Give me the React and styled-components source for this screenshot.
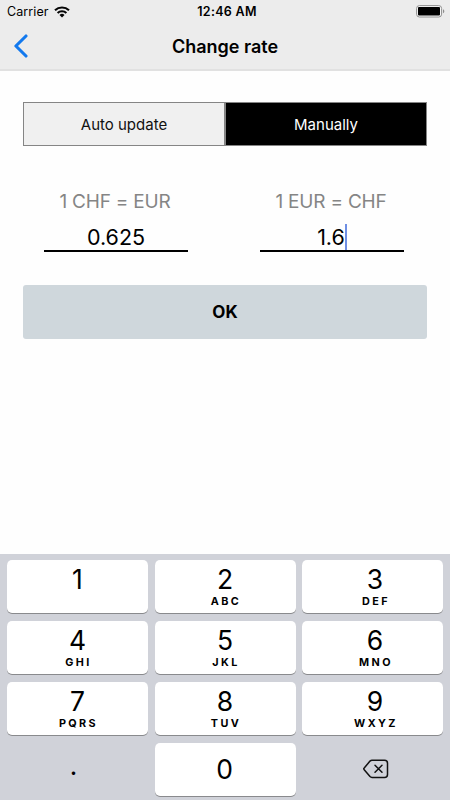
import { useState } from 'react';
//Styles
import styled, { createGlobalStyle } from 'styled-components';

const keys = [
  { digit: '1' },
  { digit: '2', letters: 'ABC' },
  { digit: '3', letters: 'DEF', shift: 5 },
  { digit: '4', letters: 'GHI' },
  { digit: '5', letters: 'JKL' },
  { digit: '6', letters: 'MNO', shift: 5 },
  { digit: '7', letters: 'PQRS' },
  { digit: '8', letters: 'TUV' },
  { digit: '9', letters: 'WXYZ', shift: 5 },
];

const WifiIcon = () => (
  <svg width="16" height="12" viewBox="0 0 16 12" fill="none" stroke="#050505" strokeWidth="2.1">
    <path d="M1 4.3a10.2 10.2 0 0 1 14 0" />
    <path d="M3.6 7a6.4 6.4 0 0 1 8.8 0" />
    <path d="M8 11.4 5.5 8.9a3.7 3.7 0 0 1 5 0z" fill="#050505" stroke="none" />
  </svg>
);

const BatteryIcon = () => (
  <svg width="29" height="13" viewBox="0 0 29 13">
    <rect x="0.6" y="0.6" width="25" height="11.4" rx="2.8" fill="#f7f7f7" stroke="#8f8f8f" />
    <rect x="2" y="2" width="22" height="8.6" rx="1" fill="#000" />
    <path d="M27 4.2c1.8.7 1.8 3.4 0 4.1z" fill="#8f8f8f" />
  </svg>
);

const BackIcon = () => (
  <svg width="14" height="24" viewBox="0 0 14 24" fill="none">
    <path
      d="M12 2 1.9 12 12 22"
      stroke="#1279ee"
      strokeWidth="3.1"
      strokeLinecap="round"
      strokeLinejoin="round"
    />
  </svg>
);

const DeleteIcon = () => (
  <svg width="26" height="20" viewBox="0 0 26 20" fill="none" stroke="#111" strokeLinecap="round" strokeLinejoin="round">
    <path
      d="M9 1.2h12.5a3 3 0 0 1 3 3v11.2a3 3 0 0 1-3 3H9c-.8 0-1.4-.3-2-.9L1.2 10.7c-.5-.5-.5-1.2 0-1.7L7 2.1c.6-.6 1.2-.9 2-.9z"
      strokeWidth="1.5"
    />
    <path d="m12 6.3 7 7M19 6.3l-7 7" strokeWidth="1.5" />
  </svg>
);

const App = () => {
  const [mode, setMode] = useState('manual');

  return (
    <Screen>
      <GlobalStyle />
      <Header>
        <StatusBar>
          <Carrier>
            <span>Carrier</span>
            <WifiIcon />
          </Carrier>
          <Time>12:46 AM</Time>
          <Battery>
            <BatteryIcon />
          </Battery>
        </StatusBar>
        <NavBar>
          <BackButton aria-label="Back">
            <BackIcon />
          </BackButton>
          <Title>Change rate</Title>
        </NavBar>
      </Header>
      <Content>
        <Tabs>
          <Tab $active={mode === 'auto'} onClick={() => setMode('auto')}>
            Auto update
          </Tab>
          <Tab $active={mode === 'manual'} onClick={() => setMode('manual')}>
            Manually
          </Tab>
        </Tabs>
        <Rates>
          <Rate>
            <RateLabel>1 CHF = EUR</RateLabel>
            <RateField>0.625</RateField>
          </Rate>
          <Rate>
            <RateLabel>1 EUR = CHF</RateLabel>
            <RateField>
              1.6
              <Caret />
            </RateField>
          </Rate>
        </Rates>
        <OkButton>OK</OkButton>
      </Content>
      <Keyboard>
        {keys.map(({ digit, letters, shift }) => (
          <Key key={digit} $shift={shift}>
            <Digit>{digit}</Digit>
            <Letters>{letters}</Letters>
          </Key>
        ))}
        <PlainKey>
          <Dot>.</Dot>
        </PlainKey>
        <Key $centered>
          <Digit>0</Digit>
        </Key>
        <PlainKey $shift={6} aria-label="Delete">
          <DeleteIcon />
        </PlainKey>
      </Keyboard>
    </Screen>
  );
};

const GlobalStyle = createGlobalStyle`
  * {
    margin: 0;
    padding: 0;
    box-sizing: border-box;
  }
  body {
    background: #fff;
    font-family: Inter, 'Liberation Sans', sans-serif;
    color: #000;
  }
  button {
    font-family: inherit;
    color: inherit;
    border: none;
    background: none;
  }
  svg {
    display: block;
  }
`;

const Screen = styled.div`
  display: flex;
  flex-direction: column;
  width: 450px;
  height: 800px;
  overflow: hidden;
  background: #fefefe;
`;

const Header = styled.header`
  height: 71px;
  background: #ececec;
  border-bottom: 2px solid #e1e1e1;
`;

const StatusBar = styled.div`
  display: grid;
  grid-template-columns: 1fr auto 1fr;
  align-items: center;
  height: 23px;
  padding: 0 5px 0 7px;
`;

const Carrier = styled.div`
  display: flex;
  align-items: center;
  gap: 5px;
  font-size: 12.5px;
  letter-spacing: 0.1px;
`;

const Time = styled.div`
  padding-left: 2px;
  font-size: 12.5px;
  font-weight: 600;
  letter-spacing: 0.3px;
`;

const Battery = styled.div`
  display: flex;
  justify-content: flex-end;
`;

const NavBar = styled.div`
  display: grid;
  grid-template-columns: 60px 1fr 60px;
  align-items: center;
  height: 46px;
`;

const BackButton = styled.button`
  padding-left: 14px;
`;

const Title = styled.h1`
  font-size: 18px;
  font-weight: 600;
  text-align: center;
`;

const Content = styled.main`
  flex: 1;
  padding: 31px 23px 0;
`;

const Tabs = styled.div`
  display: flex;
  height: 44px;
`;

const Tab = styled.button`
  flex: 1;
  border: 1px solid #858585;
  background: ${({ $active }) => ($active ? '#000' : '#f0f0f0')};
  color: ${({ $active }) => ($active ? '#fff' : '#111')};
  font-size: 15px;
`;

const Rates = styled.div`
  display: grid;
  grid-template-columns: 144px 144px;
  column-gap: 72px;
  padding: 44px 0 0 21px;
`;

const Rate = styled.div`
  display: flex;
  flex-direction: column;
`;

const RateLabel = styled.div`
  height: 24px;
  padding-right: 2px;
  line-height: 24px;
  font-size: 19px;
  letter-spacing: -0.2px;
  color: #858585;
  text-align: center;
  white-space: nowrap;
`;

const RateField = styled.div`
  display: flex;
  justify-content: center;
  height: 38px;
  padding-top: 10px;
  border-bottom: 2px solid #000;
  line-height: 27px;
  font-size: 21.5px;
`;

const Caret = styled.span`
  width: 2px;
  height: 26px;
  background: #6f8fe4;
`;

const OkButton = styled.button`
  display: block;
  width: 100%;
  height: 54px;
  margin-top: 33px;
  border-radius: 3px;
  background: #cfd7dc;
  font-size: 17px;
  font-weight: 700;
`;

const Keyboard = styled.div`
  display: grid;
  grid-template-columns: repeat(3, 141px);
  grid-auto-rows: 53px;
  gap: 8px 6.5px;
  height: 246px;
  padding: 6px 7px 0;
  background: #d0d2d9;
`;

const Key = styled.button`
  display: flex;
  flex-direction: column;
  align-items: center;
  justify-content: ${({ $centered }) => ($centered ? 'center' : 'flex-start')};
  padding-top: ${({ $centered }) => ($centered ? '0' : '5px')};
  padding-left: ${({ $shift = 0 }) => $shift}px;
  padding-right: ${({ $centered }) => ($centered ? '1px' : '0')};
  border-radius: 5px;
  background: #fff;
  box-shadow: 0 1px 0 #898a8d;
`;

const PlainKey = styled.div`
  display: flex;
  align-items: center;
  justify-content: center;
  padding: 0 0 2px ${({ $shift = 0 }) => $shift}px;
`;

const Digit = styled.span`
  line-height: 29px;
  font-size: 26.5px;
`;

const Letters = styled.span`
  padding-left: 2px;
  line-height: 16px;
  font-size: 10.8px;
  font-weight: 700;
  letter-spacing: 2.4px;
`;

const Dot = styled.span`
  padding: 0 8px 6px 0;
  line-height: 30px;
  font-size: 26px;
`;

export default App;
